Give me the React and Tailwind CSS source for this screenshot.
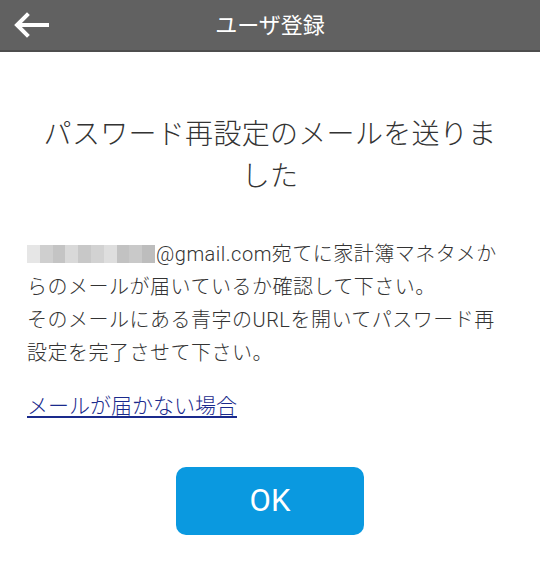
const Masked = () => {
  // ぼかされたメールアドレス部分
  const shades = ['#e6e6e6', '#cfcfcf', '#c4c4c4', '#d9d9d9', '#c8c8c8', '#d2d2d2', '#dedede', '#c2c2c2', '#c9c9c9', '#bdbdbd'];
  return (
    <span className="mr-[1px] inline-flex h-[18px] w-[128px] align-[-2px]">
      {shades.map((c, i) => (
        <span key={i} className="h-full flex-1" style={{ backgroundColor: c }} />
      ))}
    </span>
  );
};

const App = () => {
  return (
    <div className="min-h-[563px] w-[540px] bg-white font-light" style={{ fontFamily: 'Roboto, "Noto Sans CJK JP", sans-serif' }}>
      {/* ヘッダー */}
      <header className="relative flex h-[52px] items-center justify-center border-b-2 border-[#4d4d4d] bg-[#616161]">
        <button className="absolute left-[12px] top-[6px] text-white">
          <svg width="40" height="38" viewBox="0 0 40 38" fill="none" stroke="currentColor" strokeWidth="4" strokeLinecap="square">
            <path d="M6 19H35" />
            <path d="M15 9L5 19L15 29" strokeLinejoin="miter" />
          </svg>
        </button>
        <h1 className="text-[22px] font-normal text-white">ユーザ登録</h1>
      </header>

      <main className="px-[27px]">
        <h2 className="mt-[62px] px-[10px] text-center text-[28px] leading-[42px] tracking-[0.3px] text-[#333]">
          パスワード再設定のメールを送りました
        </h2>

        <p className="mt-[40px] text-[20px] leading-[33px] tracking-[0.5px] text-[#333]">
          <Masked />
          @gmail.com宛てに家計簿マネタメからのメールが届いているか確認して下さい。
          <br />
          そのメールにある青字のURLを開いてパスワード再設定を完了させて下さい。
        </p>

        <a href="#" className="mt-[21px] inline-block text-[21px] leading-[30px] text-[#1a2a8c] underline underline-offset-[3px]">
          メールが届かない場合
        </a>

        <div className="mt-[46px] flex justify-center">
          <button className="h-[68px] w-[188px] rounded-[10px] bg-[#0a99e0] text-[31px] font-normal text-white">
            OK
          </button>
        </div>
      </main>
    </div>
  );
};

export default App;
